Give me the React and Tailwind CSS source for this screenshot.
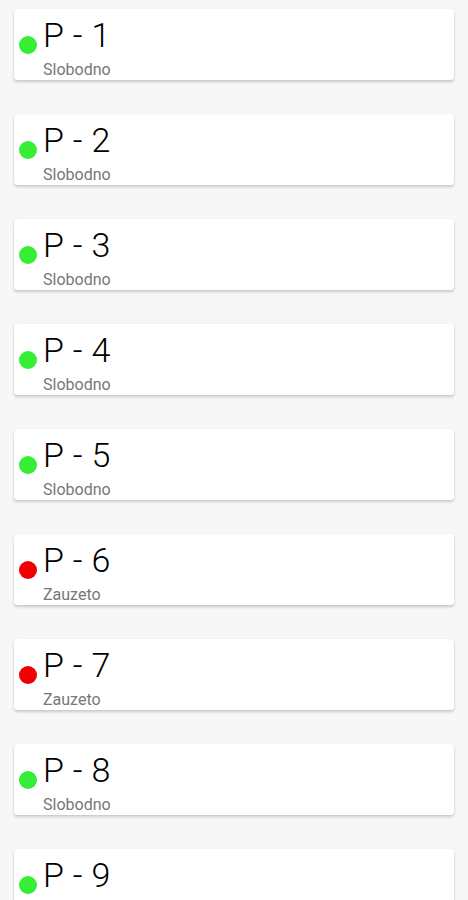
import React from "react";

const spots = [
    {name: "P - 1", free: true},
    {name: "P - 2", free: true},
    {name: "P - 3", free: true},
    {name: "P - 4", free: true},
    {name: "P - 5", free: true},
    {name: "P - 6", free: false},
    {name: "P - 7", free: false},
    {name: "P - 8", free: true},
    {name: "P - 9", free: true},
];

const SpotCard = ({spot}) => {
    return (<div
        className="flex bg-white rounded-[3px] shadow-[0_2px_3px_rgba(0,0,0,0.18),0_0_1px_rgba(0,0,0,0.12)] h-[71px] pl-[5px] shrink-0">
        <div className={"self-center w-[18px] h-[18px] rounded-full mt-[1px] " + (spot.free ? "bg-[#35ee35]" : "bg-[#f00000]")}/>
        <div className="flex flex-col ml-[6px] pt-[6px]">
            <span className="text-[34px] leading-[40px] font-light text-black tracking-[0.3px]">{spot.name}</span>
            <span className="text-[16px] leading-[19px] font-normal text-[#777] mt-[5px]">{spot.free ? "Slobodno" : "Zauzeto"}</span>
        </div>
    </div>)
}

const App = () => {
    return (<div className="w-full h-[900px] overflow-hidden bg-[#f7f7f7]"
                 style={{fontFamily: "Roboto, 'Noto Sans', sans-serif"}}>
        <div className="flex flex-col gap-[34px] px-[14px] pt-[9px]">
            {spots.map((s) => (<SpotCard key={s.name} spot={s}/>))}
        </div>
    </div>);
}

export default App;
